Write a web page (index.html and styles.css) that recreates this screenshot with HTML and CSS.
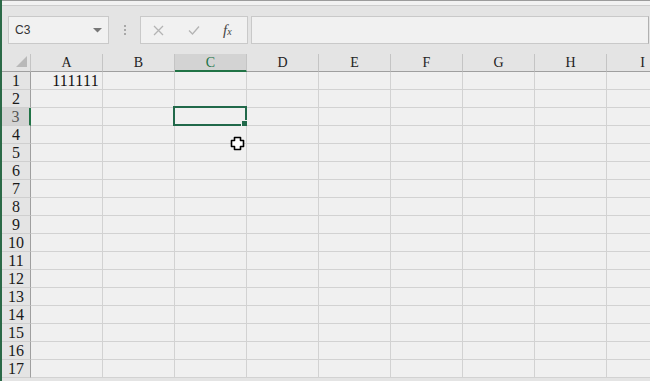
FILE: index.html
```html
<!DOCTYPE html>
<html lang="en">

<head>
  <meta charset="UTF-8" />
  <title>Sheet</title>
  <link rel="stylesheet" href="styles.css">
</head>

<body>
  <div class="okno">
    <div class="lista-hore"></div>

    <div class="vzorec">
      <div class="nazov-bunky">
        <span>C3</span>
        <svg class="sipka" width="9" height="5" viewBox="0 0 9 5"><path d="M0 0h9L4.5 4.5z" fill="#777"/></svg>
      </div>
      <div class="bodky"><i></i><i></i><i></i></div>
      <div class="tlacidla">
        <svg width="13" height="13" viewBox="0 0 13 13"><path d="M2 2l9 9M11 2l-9 9" stroke="#b4b4b4" stroke-width="1.3"/></svg>
        <svg width="14" height="12" viewBox="0 0 14 12"><path d="M2 6.5l3.5 3.5L12 2.5" stroke="#b4b4b4" stroke-width="1.3" fill="none"/></svg>
        <span class="fx">f<small>x</small></span>
      </div>
      <div class="vstup"></div>
    </div>

    <div class="harok" id="harok"></div>
  </div>

  <svg class="kurzor" width="15" height="15" viewBox="0 0 15 15">
    <path d="M4.5 1.5h6v3h3v6h-3v3h-6v-3h-3v-6h3z" fill="#fff" stroke="#000" stroke-width="1.6" stroke-linejoin="round"/>
  </svg>

  <script>
    const stlpce = ["A", "B", "C", "D", "E", "F", "G", "H", "I"]
    const harok = document.getElementById("harok")

    function bunka(trieda, text) {
      const div = document.createElement("div")
      div.className = trieda
      if (text) div.innerText = text
      harok.appendChild(div)
      return div
    }

    // hlavicka stlpcov
    bunka("roh").innerHTML = '<svg width="11" height="11" viewBox="0 0 11 11"><path d="M11 0v11H0z" fill="#b9b9b9"/></svg>'
    stlpce.forEach((s) => {
      bunka(s === "C" ? "hlavicka vybrana" : "hlavicka", s)
    })

    // riadky
    for (let r = 1; r <= 17; r++) {
      bunka(r === 3 ? "cislo vybrane" : "cislo", String(r))
      stlpce.forEach((s) => {
        const b = bunka("bunka")
        if (r === 1 && s === "A") b.innerText = "111111"
        if (r === 3 && s === "C") {
          const ram = document.createElement("div")
          ram.className = "vyber"
          ram.innerHTML = '<span class="uchyt"></span>'
          b.appendChild(ram)
        }
      })
    }
  </script>
</body>

</html>
```

FILE: styles.css
```css
body {
  margin: 0;
  width: 650px;
  height: 381px;
  overflow: hidden;
  background-color: #e4e4e4;
  font-family: "Liberation Serif", serif;
  position: relative;
}

.okno {
  height: 381px;
  border-left: 2px solid #2b6a47;
  overflow: hidden;
}

.lista-hore {
  height: 4px;
  border-top: 1px solid #9c9c9c;
  border-bottom: 1px solid #cdcdcd;
  background: #f2f2f2;
  margin-bottom: 10px;
}

.vzorec {
  display: flex;
  align-items: center;
  height: 28px;
  padding-left: 6px;
}

.nazov-bunky {
  width: 99px;
  height: 26px;
  border: 1px solid #c9c9c9;
  background: #f1f1f1;
  display: flex;
  align-items: center;
  justify-content: space-between;
  font-family: "Liberation Sans", sans-serif;
  font-size: 12px;
  color: #333;
}

.nazov-bunky span {
  padding-left: 6px;
}

.sipka {
  margin-right: 6px;
}

.bodky {
  width: 31px;
  display: flex;
  flex-direction: column;
  align-items: center;
  gap: 2px;
}

.bodky i {
  width: 2px;
  height: 2px;
  background: #a8a8a8;
}

.tlacidla {
  width: 108px;
  height: 28px;
  border: 1px solid #c9c9c9;
  background: #f1f1f1;
  display: flex;
  align-items: center;
  gap: 22px;
  padding-left: 11px;
  box-sizing: border-box;
}

.fx {
  font-family: "Liberation Serif", serif;
  font-style: italic;
  font-size: 15px;
  color: #444;
}

.fx small {
  font-size: 10px;
}

.vstup {
  margin-left: 3px;
  flex: 1;
  height: 26px;
  border: 1px solid #c9c9c9;
  border-right-color: #b0b0b0;
  background: #f1f1f1;
  margin-right: 1px;
}

.harok {
  margin-top: 10px;
  display: grid;
  grid-template-columns: 29px repeat(9, 72px);
  grid-auto-rows: 18px;
}

.roh {
  border-right: 1px solid #c4c4c4;
  border-bottom: 1px solid #9f9f9f;
  box-sizing: border-box;
  display: flex;
  align-items: flex-end;
  justify-content: flex-end;
  padding: 0 3px 4px 0;
}

.hlavicka {
  background: #e4e4e4;
  border-right: 1px solid #c4c4c4;
  border-bottom: 1px solid #9f9f9f;
  box-sizing: border-box;
  text-align: center;
  font-size: 14px;
  line-height: 18px;
  color: #222;
}

.hlavicka.vybrana {
  background: #d3d3d3;
  border-bottom: 2px solid #217346;
  color: #217346;
}

.cislo {
  background: #e4e4e4;
  border-right: 1px solid #9f9f9f;
  border-bottom: 1px solid #cfcfcf;
  box-sizing: border-box;
  text-align: center;
  font-size: 16px;
  line-height: 18px;
  color: #1a1a1a;
}

.cislo.vybrane {
  background: #d3d3d3;
  border-right: 2px solid #217346;
  color: #555;
}

.bunka {
  background: #f0f0f0;
  border-right: 1px solid #d2d2d2;
  border-bottom: 1px solid #d2d2d2;
  box-sizing: border-box;
  text-align: right;
  font-size: 16px;
  letter-spacing: 0.3px;
  line-height: 18px;
  padding-right: 3px;
  color: #111;
  position: relative;
}

.vyber {
  position: absolute;
  left: -2px;
  top: -2px;
  right: -1px;
  bottom: -1px;
  border: 2px solid #21694a;
}

.uchyt {
  position: absolute;
  right: -3px;
  bottom: -3px;
  width: 5px;
  height: 5px;
  background: #21694a;
  border: 1px solid #f0f0f0;
}

.kurzor {
  position: absolute;
  left: 230px;
  top: 136px;
}
```
